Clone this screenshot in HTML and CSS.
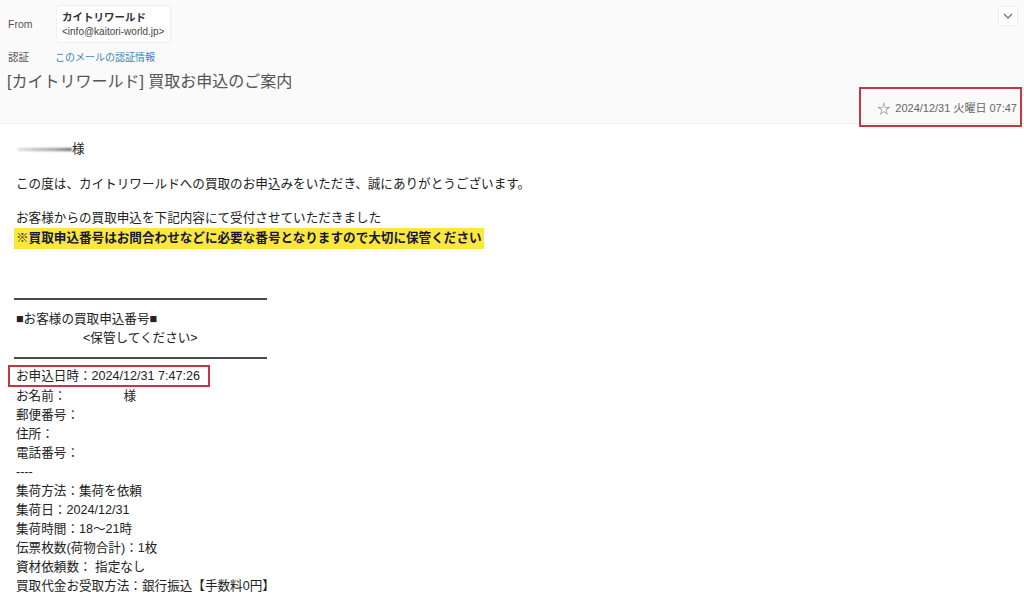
FILE: index.html
```html
<!DOCTYPE html>
<html lang="ja">
<head>
<meta charset="utf-8">
<title>[カイトリワールド] 買取お申込のご案内</title>
<link rel="stylesheet" href="styles.css">
</head>
<body>
<header class="mail-header">
  <div class="row-from">
    <span class="label">From</span>
    <div class="sender">
      <div class="sender-name">カイトリワールド</div>
      <div class="sender-addr">&lt;info@kaitori-world.jp&gt;</div>
    </div>
    <button class="toggle" aria-label="詳細">
      <svg width="10" height="6" viewBox="0 0 10 6"><path d="M1 1l4 4 4-4" fill="none" stroke="#777" stroke-width="1.3"/></svg>
    </button>
  </div>
  <div class="row-auth">
    <span class="label">認証</span>
    <a class="auth-link" href="#">このメールの認証情報</a>
  </div>
  <h1 class="subject">[カイトリワールド] 買取お申込のご案内</h1>
  <div class="row-date">
    <span class="date-box"><span class="star">☆</span>2024/12/31 火曜日 07:47</span>
  </div>
</header>
<main class="mail-body">
  <p class="greet"><span class="blur-name"></span>様</p>
  <p class="para1">この度は、カイトリワールドへの買取のお申込みをいただき、誠にありがとうございます。</p>
  <p class="para2">お客様からの買取申込を下記内容にて受付させていただきました</p>
  <p class="notice"><span class="hl">※買取申込番号はお問合わせなどに必要な番号となりますので大切に保管ください</span></p>
  <div class="rule rule-top"></div>
  <p class="line">■お客様の買取申込番号■</p>
  <p class="line indent">&lt;保管してください&gt;</p>
  <div class="rule rule-bottom"></div>
  <div class="list">
    <p class="line"><span class="mark">お申込日時：2024/12/31 7:47:26</span></p>
    <p class="line">お名前：<span class="name-gap"></span>様</p>
    <p class="line">郵便番号：</p>
    <p class="line">住所：</p>
    <p class="line">電話番号：</p>
    <p class="line">----</p>
    <p class="line">集荷方法：集荷を依頼</p>
    <p class="line">集荷日：2024/12/31</p>
    <p class="line">集荷時間：18〜21時</p>
    <p class="line">伝票枚数(荷物合計)：1枚</p>
    <p class="line">資材依頼数： 指定なし</p>
    <p class="line">買取代金お受取方法：銀行振込【手数料0円】</p>
    <p class="line">----</p>
  </div>
</main>
</body>
</html>
```
FILE: styles.css
```css
* { box-sizing: border-box; }
html, body { margin: 0; padding: 0; background: #fff; }
body {
  width: 1024px;
  height: 605px;
  overflow: hidden;
  font-family: "Liberation Sans", "Noto Sans CJK JP", sans-serif;
  color: #222;
}
.mail-header {
  height: 124px;
  background: #fafafa;
  border-bottom: 1px solid #ededed;
  padding: 5px 6px 0 8px;
  display: flex;
  flex-direction: column;
}
.mail-header > * { flex-shrink: 0; }
.label {
  font-size: 10.5px;
  color: #555;
  width: 48px;
  flex: none;
}
.row-from {
  display: flex;
  align-items: center;
}
.sender {
  background: #fff;
  border: 1px solid #f0f0f0;
  border-radius: 2px;
  padding: 4px 6px 5px 5px;
  height: 38px;
}
.sender-name {
  font-size: 10.5px;
  font-weight: bold;
  color: #333;
  line-height: 14px;
}
.sender-addr {
  font-size: 10px;
  color: #444;
  line-height: 14px;
  margin-top: 1px;
}
.toggle {
  margin-left: auto;
  align-self: flex-start;
  margin-top: 1px;
  width: 20px;
  height: 20px;
  padding: 0;
  background: #fff;
  border: 1px solid #eee;
  border-radius: 2px;
  display: flex;
  align-items: center;
  justify-content: center;
}
.row-auth {
  display: flex;
  align-items: center;
  margin-top: 4px;
  height: 18px;
}
.row-auth .label { width: 47px; }
.auth-link {
  font-size: 10px;
  color: #3b86b3;
  text-decoration: none;
}
.subject {
  margin: 6px 0 0 -1px;
  font-size: 16px;
  line-height: 22px;
  font-weight: normal;
  color: #555;
}
.row-date {
  display: flex;
  justify-content: flex-end;
  margin-top: -6px;
  margin-right: -4px;
}
.date-box {
  display: flex;
  align-items: center;
  height: 40px;
  padding: 0 3px 0 16px;
  border: 2px solid #c73442;
  font-size: 11px;
  color: #666;
  background: transparent;
}
.star {
  font-size: 13px;
  color: #777;
  margin-right: 5px;
}
.mail-body {
  padding: 16px 0 0 16px;
  font-size: 12.6px;
}
.mail-body p {
  margin: 0;
  line-height: 19px;
}
.greet {
  display: flex;
  align-items: center;
}
.blur-name {
  display: inline-block;
  width: 54px;
  height: 3px;
  margin-left: 2px;
  background: linear-gradient(90deg, #ddd, #999 70%, #666);
  filter: blur(1.2px);
}
.mail-body .para1 { margin-top: 16px; }
.mail-body .para2 { margin-top: 15px; }
.mail-body .notice { line-height: 21px; }
.hl {
  display: inline-block;
  background: #fbe83d;
  font-weight: bold;
  color: #15153d;
  padding: 0 2px;
  margin-left: -2px;
}
.rule {
  width: 253px;
  border-top: 2px solid #4a4a4a;
  margin-left: -2px;
}
.rule-top { margin-top: 49px; margin-bottom: 10px; }
.rule-bottom { margin-top: 9px; margin-bottom: 8px; }
.indent { padding-left: 67px; }
.mark {
  border: 2px solid #c73442;
  padding: 2px 8px 2px 6px;
  margin-left: -8px;
}
.list .line:first-child { margin-bottom: 1px; }
.name-gap {
  display: inline-block;
  width: 57px;
}
```
